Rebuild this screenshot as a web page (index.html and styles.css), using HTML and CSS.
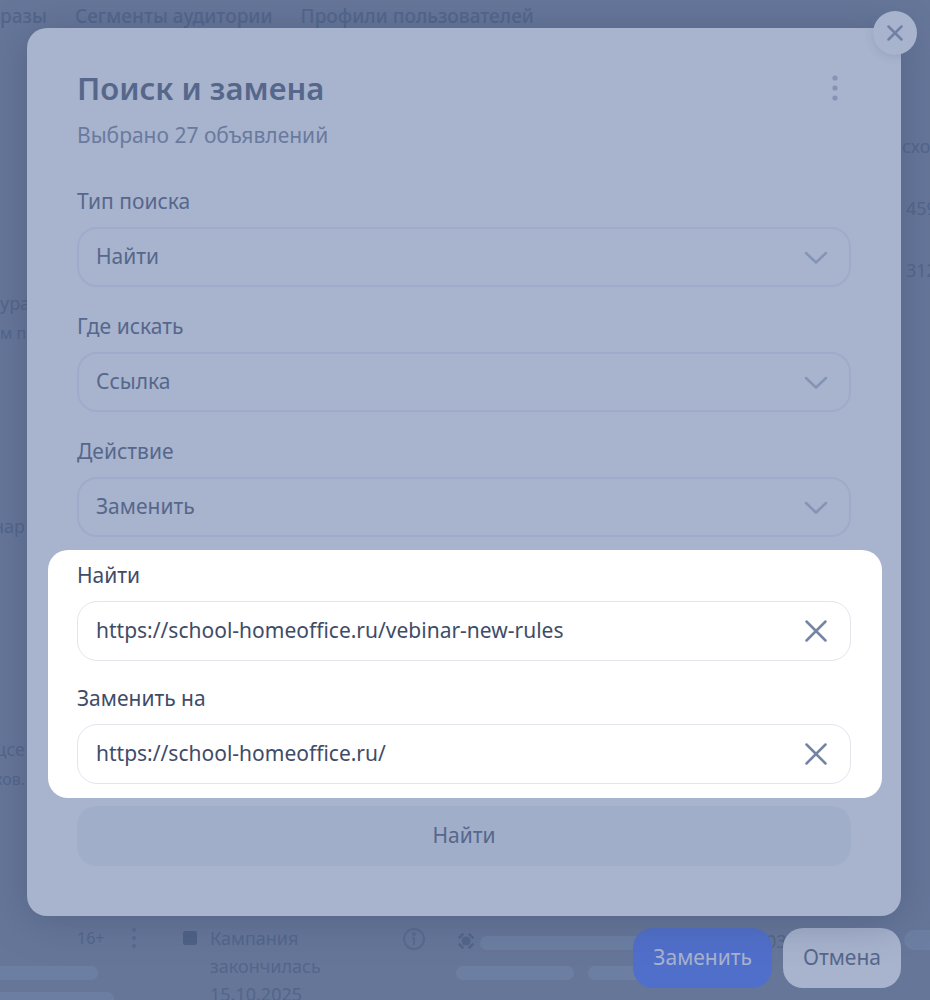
FILE: index.html
```
<!DOCTYPE html>
<html lang="ru">
  <head>
    <meta charset="utf-8">
    <meta name="viewport" content="width=device-width, initial-scale=1">
    <title>Поиск и замена</title>
    <link rel="stylesheet" href="styles.css">
  </head>
  <body>
    <!-- страница под окном -->
    <div class="page">
      <nav class="tabs">
        <a class="tab-first" href="#">бразы</a>
        <a href="#">Сегменты аудитории</a>
        <a href="#">Профили пользователей</a>
      </nav>

      <div class="table">
        <div class="col-left">
          <div class="cell cell-start"><span>ура</span><small>м по</small></div>
          <div class="cell"><span>нар</span></div>
          <div class="cell"><span>цсе</span><small>ков.</small></div>
        </div>
        <div class="col-right">
          <div>схо</div>
          <div class="num">459</div>
          <div class="num">312</div>
        </div>
      </div>

      <div class="row">
        <div class="row-name">
          <div class="row-age">
            <span>16+</span>
            <svg width="6" height="22" viewBox="0 0 6 22"><circle cx="3" cy="3" r="2"/><circle cx="3" cy="11" r="2"/><circle cx="3" cy="19" r="2"/></svg>
          </div>
          <div class="bar bar-a"></div>
          <div class="bar bar-b"></div>
        </div>
        <div class="row-status">
          <span class="stop"></span>
          <p>Кампания закончилась 15.10.2025</p>
          <svg width="24" height="24" viewBox="0 0 24 24">
            <circle cx="12" cy="12" r="10" fill="none" stroke="currentColor" stroke-width="2"/>
            <circle cx="12" cy="7" r="2"/>
            <path d="M10 10h3v8h-2v-6h-1z"/>
          </svg>
        </div>
        <div class="row-stat">
          <div class="line">
            <svg width="16" height="16" viewBox="0 0 16 16">
              <circle cx="8" cy="8" r="4.5"/>
              <path d="M1.500 4.500 4.500 1.500M11.500 1.500 14.500 4.500M14.500 11.500 11.500 14.500M4.500 14.500 1.500 11.500" fill="none" stroke="currentColor" stroke-width="2.600" stroke-linecap="round"/>
            </svg>
            <div class="bar bar-c"></div>
          </div>
          <div class="line line-2">
            <div class="bar bar-d"></div>
            <div class="bar bar-d"></div>
          </div>
        </div>
        <div class="row-date">03</div>
        <div class="pill"></div>
      </div>
    </div>

    <!-- окно -->
    <div class="layer">
      <form class="modal">
        <button class="close" type="button" aria-label="Закрыть">
          <svg width="16" height="16" viewBox="0 0 16 16"><path d="M1.500 1.500l13 13M14.500 1.500l-13 13"/></svg>
        </button>

        <div class="head">
          <h1>Поиск и замена</h1>
          <button class="more" type="button" aria-label="Ещё">
            <svg width="6" height="26" viewBox="0 0 6 26"><circle cx="3" cy="3" r="2.600"/><circle cx="3" cy="13" r="2.600"/><circle cx="3" cy="23" r="2.600"/></svg>
          </button>
        </div>
        <p class="sub">Выбрано 27 объявлений</p>

        <div class="field">
          <label for="type">Тип поиска</label>
          <div class="control">
            <select id="type"><option>Найти</option></select>
            <svg class="icon" width="24" height="24" viewBox="0 0 24 24"><path d="M2 8l10 9.500L22 8"/></svg>
          </div>
        </div>
        <div class="field">
          <label for="where">Где искать</label>
          <div class="control">
            <select id="where"><option>Ссылка</option></select>
            <svg class="icon" width="24" height="24" viewBox="0 0 24 24"><path d="M2 8l10 9.500L22 8"/></svg>
          </div>
        </div>
        <div class="field">
          <label for="action">Действие</label>
          <div class="control">
            <select id="action"><option>Заменить</option></select>
            <svg class="icon" width="24" height="24" viewBox="0 0 24 24"><path d="M2 8l10 9.500L22 8"/></svg>
          </div>
        </div>

        <div class="spot">
          <div class="field">
            <label for="find">Найти</label>
            <div class="control">
              <input id="find" type="text" value="https://school-homeoffice.ru/vebinar-new-rules">
              <button class="icon" type="button" aria-label="Очистить">
                <svg width="24" height="24" viewBox="0 0 24 24"><path d="M2.500 2.500l19 19M21.500 2.500l-19 19"/></svg>
              </button>
            </div>
          </div>
          <div class="field">
            <label for="replace">Заменить на</label>
            <div class="control">
              <input id="replace" type="text" value="https://school-homeoffice.ru/">
              <button class="icon" type="button" aria-label="Очистить">
                <svg width="24" height="24" viewBox="0 0 24 24"><path d="M2.500 2.500l19 19M21.500 2.500l-19 19"/></svg>
              </button>
            </div>
          </div>
        </div>

        <button class="search" type="button">Найти</button>
      </form>

      <div class="buttons">
        <button class="btn primary" type="button">Заменить</button>
        <button class="btn" type="button">Отмена</button>
      </div>
    </div>
  </body>
</html>
```

FILE: styles.css
```
*{
  box-sizing: border-box;
}

body{
  margin: 0;
  position: relative;
  min-height: 100vh;
  overflow: hidden;
  background: #667699;
  color: #56678c;
  font-family: "Noto Sans", "Open Sans", sans-serif;
  font-size: 21px;
}

h1, p{
  margin: 0;
}

button, input, select{
  font: inherit;
  color: inherit;
  border: 0;
  margin: 0;
  padding: 0;
  background: none;
}

svg{
  display: block;
  fill: currentColor;
}

/* страница под окном */
.page{
  height: 100vh;
  overflow: hidden;
  display: flex;
  flex-direction: column;
  font-size: 18px;
  color: #53658a;
}

.tabs{
  display: flex;
  gap: 28px;
  height: 32px;
  font-size: 19px;
  font-weight: 500;
  line-height: 32px;
  white-space: nowrap;
}

.tabs a{
  color: inherit;
  text-decoration: none;
}

.tab-first{
  display: flex;
  justify-content: flex-end;
  width: 47px;
}

.table{
  flex: 1;
  min-height: 0;
  display: flex;
  justify-content: space-between;
  line-height: 30px;
}

.col-left{
  width: 25px;
  padding-top: 256px;
}

.cell{
  display: flex;
  flex-direction: column;
  align-items: flex-end;
  height: 223px;
  white-space: nowrap;
}

.cell-start{
  align-items: flex-start;
}

.cell small{
  font-size: 16px;
}

.col-right{
  width: 28px;
  padding-top: 99px;
  display: flex;
  flex-direction: column;
  gap: 32px;
}

.num{
  padding-left: 4px;
}

.row{
  display: flex;
  height: 76px;
  line-height: 28px;
}

.row-name{
  width: 183px;
}

.row-age{
  display: flex;
  align-items: center;
  gap: 27px;
  height: 28px;
  padding-left: 77px;
  font-size: 16px;
}

.row-age svg, .row-status svg{
  color: #586a8f;
}

.bar{
  height: 14px;
  border-radius: 7px;
  background: #6c7fa2;
}

.bar-a{
  width: 98px;
  margin: 14px 0 12px;
  border-radius: 0 7px 7px 0;
}

.bar-b{
  width: 114px;
  border-radius: 0 7px 7px 0;
}

.row-status{
  display: flex;
  width: 273px;
}

.row-status p{
  width: 192px;
  margin-left: 13px;
  padding-right: 60px;
}

.row-status svg{
  margin-top: 3px;
}

.stop{
  width: 14px;
  height: 14px;
  margin-top: 7px;
  border-radius: 2px;
  background: #4f6186;
}

.row-stat{
  width: 310px;
  padding-top: 9px;
}

.line{
  display: flex;
  gap: 6px;
  padding-left: 2px;
}

.line-2{
  gap: 14px;
  margin-top: 16px;
  padding-left: 0;
}

.bar-c{
  width: 180px;
  margin-top: 3px;
}

.bar-d{
  width: 118px;
}

.row-date{
  padding-top: 3px;
}

.pill{
  width: 26px;
  height: 20px;
  margin: 6px 0 0 auto;
  border-radius: 10px 0 0 10px;
  background: #6c7fa2;
}

/* окно */
.layer{
  position: absolute;
  top: 0;
  left: 0;
  right: 0;
  padding: 28px 29px 12px 27px;
}

.modal{
  position: relative;
  padding: 40px 50px 50px;
  border-radius: 20px;
  background: #a8b3cd;
  box-shadow: 0 4px 40px rgba(60, 77, 112, .45);
}

.close{
  position: absolute;
  top: -17px;
  right: -16px;
  display: flex;
  align-items: center;
  justify-content: center;
  width: 44px;
  height: 44px;
  border-radius: 50%;
  background: #a8b3cd;
  color: #7181a5;
  box-shadow: 0 2px 8px rgba(90, 107, 145, .2);
}

.close path, .icon path{
  fill: none;
  stroke: currentColor;
  stroke-width: 2.5;
  stroke-linecap: round;
  stroke-linejoin: round;
}

.head{
  display: flex;
  justify-content: space-between;
  align-items: center;
}

h1{
  font-size: 31px;
  font-weight: 600;
  line-height: 40px;
}

.more{
  margin-right: 13px;
  color: #8494b5;
}

.sub{
  margin: 12px 0 36px;
  line-height: 30px;
  color: #6a7a9f;
}

.field{
  margin-bottom: 24px;
}

.field label{
  display: block;
  margin-bottom: 11px;
  line-height: 30px;
}

.control{
  position: relative;
}

.control select, .control input{
  display: block;
  width: 100%;
  height: 60px;
  padding: 0 60px 2px 17px;
  border: 2px solid #9fabca;
  border-radius: 20px;
  appearance: none;
  outline: none;
}

.icon{
  position: absolute;
  top: 18px;
  right: 23px;
  color: #8494b5;
  pointer-events: none;
}

/* подсвеченный блок */
.spot{
  margin: -11px -31px 8px -29px;
  padding: 10px 31px 14px 29px;
  border-radius: 20px;
  background: #fff;
  color: #3f4c68;
}

.spot .field{
  margin-bottom: 22px;
}

.spot .field:last-child{
  margin-bottom: 0;
}

.spot input{
  padding-left: 18px;
  border: 1px solid #e3e4ee;
}

.spot .icon{
  color: #7484a5;
  pointer-events: auto;
}

.search{
  display: block;
  width: 100%;
  height: 60px;
  padding-bottom: 2px;
  border-radius: 20px;
  background: #a0aec9;
}

.buttons{
  display: flex;
  justify-content: flex-end;
  gap: 11px;
  margin-top: 12px;
}

.btn{
  height: 60px;
  padding: 0 20px 2px;
  border-radius: 20px;
  background: #a8b3cd;
}

.primary{
  background: #506fcb;
  color: #a8b3cd;
}
```
